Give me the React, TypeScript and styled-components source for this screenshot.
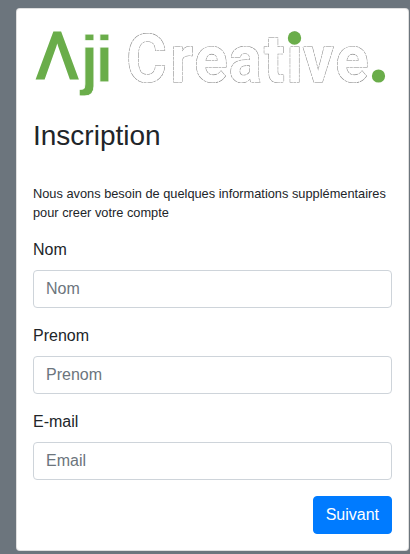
import React from "react";
import styled, { createGlobalStyle } from "styled-components";

const GlobalStyle = createGlobalStyle`
  *, *::before, *::after { box-sizing: border-box; }
  body {
    margin: 0;
    background: #6c757d;
    color: #212529;
    font-family: "Liberation Sans", Arial, sans-serif;
    font-size: 16px;
    line-height: 1.5;
  }
`;

const Page = styled.main`
  min-height: 554px;
  padding: 8px 1px 3px 16px;
`;

const Card = styled.section`
  height: 543px;
  padding: 16px;
  background: #fff;
  border: 1px solid rgba(0, 0, 0, 0.125);
  border-radius: 4px;
`;

const Logo = styled.svg`
  display: block;
  width: 359px;
  height: 85px;
  overflow: visible;
`;

const GreenLambda = styled.text`
  font-family: "Liberation Sans", Arial, sans-serif;
  font-weight: 400;
  font-size: 64px;
  fill: #6aad4a;
  stroke: #6aad4a;
  stroke-width: 3.2;
`;

const GreenLetters = styled.text`
  font-family: "Liberation Sans", Arial, sans-serif;
  font-weight: 700;
  font-size: 66px;
  fill: #6aad4a;
  stroke: #fff;
  stroke-width: 0.8;
`;

const OutlinedLetters = styled.text`
  font-family: Roboto, sans-serif;
  font-weight: 700;
  font-size: 66.5px;
  fill: #fff;
  stroke: #888;
  stroke-width: 1.2;
  stroke-dasharray: 6 0.8 3 0.6;
  paint-order: stroke;
`;

const Title = styled.h3`
  margin: 9px 0 31px;
  font-size: 28px;
  font-weight: 400;
  line-height: 33.6px;
`;

const Intro = styled.p`
  margin: 0 0 16px;
  font-size: 12.8px;
  line-height: 19.2px;
`;

const Field = styled.div`
  margin-bottom: 16px;
`;

const Label = styled.label`
  display: block;
  height: 24px;
  margin-bottom: 8px;
`;

const Input = styled.input`
  display: block;
  width: 100%;
  height: 38px;
  padding: 6px 12px;
  border: 1px solid #ced4da;
  border-radius: 4px;
  background: #fff;
  color: #495057;
  font: inherit;
  &::placeholder { color: #6c757d; opacity: 1; }
`;

const Actions = styled.div`
  display: flex;
  justify-content: flex-end;
`;

const Button = styled.button`
  height: 38px;
  padding: 6px 12px;
  border: 1px solid #007bff;
  border-radius: 4px;
  background: #007bff;
  color: #fff;
  font: inherit;
`;

const fields = [
  { id: "nom", label: "Nom", placeholder: "Nom" },
  { id: "prenom", label: "Prenom", placeholder: "Prenom" },
  { id: "email", label: "E-mail", placeholder: "Email" },
];

function BrandLogo() {
  return (
    <Logo viewBox="33 25 359 85" role="img" aria-label="Aji Creative">
      <GreenLambda x="37.5" y="77.5" textLength="39.5" lengthAdjust="spacingAndGlyphs">Λ</GreenLambda>
      <GreenLetters x="80.3 95.2" y="82">ji</GreenLetters>
      <g transform="scale(0.92 1)">
        <OutlinedLetters x="137.5 185.3 211.3 249 287 311.5 329 364.8" y="82">Creative</OutlinedLetters>
      </g>
      <circle cx="294.5" cy="38" r="6.7" fill="#6aad4a" />
      <circle cx="378.5" cy="76" r="6.6" fill="#6aad4a" />
    </Logo>
  );
}

export default function App() {
  return (
    <>
      <GlobalStyle />
      <Page>
        <Card>
          <BrandLogo />
          <Title>Inscription</Title>
          <Intro>Nous avons besoin de quelques informations supplémentaires pour creer votre compte</Intro>
          {fields.map((f) => (
            <Field key={f.id}>
              <Label htmlFor={f.id}>{f.label}</Label>
              <Input id={f.id} placeholder={f.placeholder} />
            </Field>
          ))}
          <Actions>
            <Button type="button">Suivant</Button>
          </Actions>
        </Card>
      </Page>
    </>
  );
}
